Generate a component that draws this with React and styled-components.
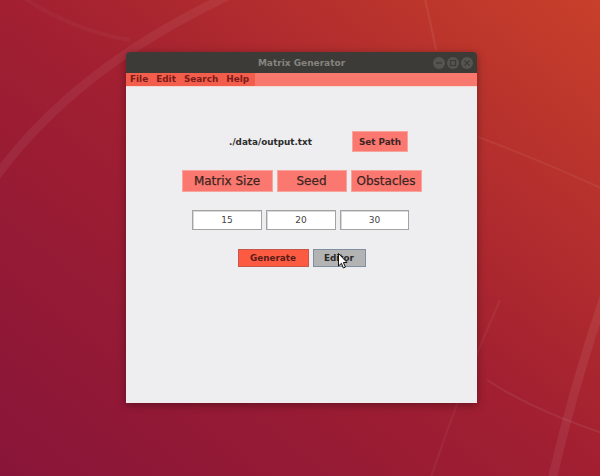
import React from "react";
import styled, { createGlobalStyle } from "styled-components";

const GlobalStyle = createGlobalStyle`
  html, body { margin: 0; padding: 0; }
  body {
    width: 600px;
    height: 476px;
    overflow: hidden;
    font-family: "DejaVu Sans", "Liberation Sans", sans-serif;
  }
`;

const Desktop = styled.div`
  position: relative;
  width: 600px;
  height: 476px;
  box-sizing: border-box;
  padding: 52px 0 0 126px;
  background: linear-gradient(to top right, #881539 0%, #a11f31 50%, #c8402a 100%);
  overflow: hidden;
`;

const Wallpaper = styled.svg`
  position: absolute;
  inset: 0;
  z-index: 0;
  pointer-events: none;
`;

const Window = styled.div`
  position: relative;
  z-index: 1;
  width: 351px;
  display: flex;
  flex-direction: column;
  box-shadow: 0 2px 8px rgba(0, 0, 0, 0.35);
  border-radius: 4px 4px 0 0;
`;

const TitleBar = styled.div`
  height: 21px;
  background: #3c3b37;
  border-radius: 4px 4px 0 0;
  display: grid;
  grid-template-columns: 1fr auto 1fr;
  align-items: center;
`;

const Title = styled.span`
  grid-column: 2;
  font-size: 9px;
  font-weight: bold;
  color: #85847f;
`;

const Controls = styled.div`
  grid-column: 3;
  justify-self: end;
  display: flex;
  gap: 2px;
  padding-right: 4px;
`;

const Ctrl = styled.span`
  width: 12px;
  height: 12px;
  border-radius: 50%;
  background: #55544f;
  display: flex;
  align-items: center;
  justify-content: center;
`;

const MenuBar = styled.div`
  height: 13px;
  background: #f9786d;
  display: flex;
  border-bottom: 1px solid #f3d8d4;
`;

const MenuGroup = styled.div`
  display: flex;
  background: #f35d4b;
  padding-right: 2px;
`;

const MenuItem = styled.span`
  padding: 0 4px;
  font-size: 8.9px;
  font-weight: bold;
  line-height: 13px;
  color: #7a1b18;
`;

const Content = styled.div`
  height: 316px;
  background: #eeedef;
  display: flex;
  flex-direction: column;
  align-items: center;
  padding-top: 44px;
  box-sizing: border-box;
`;

const Row = styled.div`
  display: flex;
  align-items: center;
  gap: ${(p) => p.$gap || 4}px;
  margin-top: ${(p) => p.$mt || 0}px;
  margin-right: ${(p) => p.$mr || 0}px;
`;

const PathLabel = styled.span`
  width: 151px;
  text-align: center;
  font-size: 8.8px;
  font-weight: bold;
  color: #2c2c2c;
`;

const variants = {
  salmon: { bg: "#fa786f", border: "#f7a49d", color: "#3d2523" },
  red: { bg: "#fd5a42", border: "#c9564a", color: "#5a1d17" },
  gray: { bg: "#b3b3b3", border: "#7e8fa3", color: "#2a2a2a" },
};

const Button = styled.div`
  position: relative;
  box-sizing: border-box;
  width: ${(p) => p.$w}px;
  height: ${(p) => p.$h}px;
  background: ${(p) => variants[p.$v].bg};
  border: 1px solid ${(p) => variants[p.$v].border};
  color: ${(p) => variants[p.$v].color};
  font-size: ${(p) => (p.$big ? "12px" : "8.8px")};
  font-weight: ${(p) => (p.$big ? "normal" : "bold")};
  -webkit-text-stroke: ${(p) => (p.$big ? "0.25px" : "0")};
  display: flex;
  align-items: center;
  justify-content: center;
  white-space: nowrap;
`;

const Field = styled.div`
  box-sizing: border-box;
  width: ${(p) => p.$w}px;
  height: 20px;
  background: #ffffff;
  border: 1px solid #a3a3a3;
  box-shadow: inset 1px 1px 0 #d8d8d8;
  font-size: 9px;
  color: #444;
  display: flex;
  align-items: center;
  justify-content: center;
`;

const Cursor = styled.svg`
  position: absolute;
  left: 24px;
  top: 3px;
`;

export default function App() {
  return (
    <>
      <GlobalStyle />
      <Desktop>
        <Wallpaper width="600" height="476" viewBox="0 0 600 476">
          <g fill="none" stroke="#ffffff">
            <path d="M-10 185 Q 70 70 230 -5" strokeWidth="9" strokeOpacity="0.06" />
            <path d="M20 -5 Q 70 30 130 40" strokeWidth="4" strokeOpacity="0.035" />
            <path d="M424 -5 Q 430 20 436 50" strokeWidth="2" strokeOpacity="0.07" />
            <path d="M478 137 Q 540 160 605 190" strokeWidth="2" strokeOpacity="0.06" />
            <path d="M610 280 Q 575 380 552 480" strokeWidth="9" strokeOpacity="0.07" />
            <path d="M487 380 Q 533 410 605 434" strokeWidth="2" strokeOpacity="0.07" />
            <path d="M500 300 Q 460 390 430 480" strokeWidth="2" strokeOpacity="0.05" />
          </g>
        </Wallpaper>
        <Window>
          <TitleBar>
            <Title>Matrix Generator</Title>
            <Controls>
              <Ctrl>
                <svg width="8" height="8" viewBox="0 0 8 8">
                  <path d="M1 4h6" stroke="#3c3b37" strokeWidth="1.3" />
                </svg>
              </Ctrl>
              <Ctrl>
                <svg width="8" height="8" viewBox="0 0 8 8">
                  <rect x="1.5" y="1.5" width="5" height="5" fill="none" stroke="#3c3b37" strokeWidth="1.2" />
                </svg>
              </Ctrl>
              <Ctrl>
                <svg width="8" height="8" viewBox="0 0 8 8">
                  <path d="M1.5 1.5l5 5M6.5 1.5l-5 5" stroke="#3c3b37" strokeWidth="1.2" />
                </svg>
              </Ctrl>
            </Controls>
          </TitleBar>
          <MenuBar>
            <MenuGroup>
              <MenuItem>File</MenuItem>
              <MenuItem>Edit</MenuItem>
              <MenuItem>Search</MenuItem>
              <MenuItem>Help</MenuItem>
            </MenuGroup>
          </MenuBar>
          <Content>
            <Row $gap={6}>
              <PathLabel>./data/output.txt</PathLabel>
              <Button $v="salmon" $w={56} $h={21}>Set Path</Button>
            </Row>
            <Row $mt={18}>
              <Button $v="salmon" $w={91} $h={22} $big>Matrix Size</Button>
              <Button $v="salmon" $w={70} $h={22} $big>Seed</Button>
              <Button $v="salmon" $w={71} $h={22} $big>Obstacles</Button>
            </Row>
            <Row $mt={18} $mr={2}>
              <Field $w={70}>15</Field>
              <Field $w={70}>20</Field>
              <Field $w={69}>30</Field>
            </Row>
            <Row $mt={19}>
              <Button $v="red" $w={71} $h={18}>Generate</Button>
              <Button $v="gray" $w={53} $h={18}>
                Editor
                <Cursor width="10" height="16" viewBox="0 0 10 16">
                  <path d="M0.5 0.5 L0.5 13 L3.4 10.3 L5.4 15 L7.4 14.1 L5.4 9.5 L9 9.5 Z" fill="#ffffff" stroke="#111" strokeWidth="1" strokeLinejoin="round" />
                </Cursor>
              </Button>
            </Row>
          </Content>
        </Window>
      </Desktop>
    </>
  );
}
